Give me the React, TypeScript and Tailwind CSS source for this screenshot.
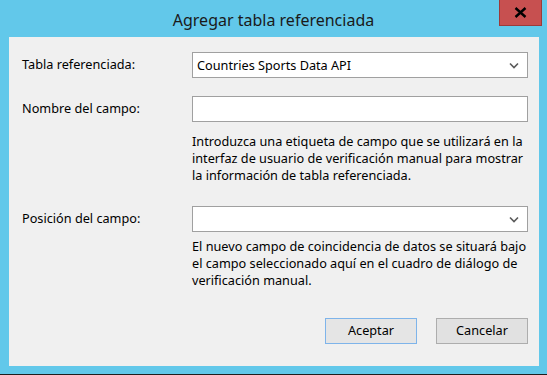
function Chevron() {
  return (
    <svg width="10" height="7" viewBox="0 0 10 7" className="shrink-0">
      <path d="M1 1.5 L5 5.5 L9 1.5" fill="none" stroke="#5a5a5a" strokeWidth="1.6" />
    </svg>
  );
}

type SelectProps = {
  value?: string;
};

function SelectBox({ value }: SelectProps) {
  return (
    <div className="flex h-[26px] w-[336px] items-center justify-between border border-[#a0a0a0] bg-white pl-[4px] pr-[8px]">
      <span className="leading-none text-black">{value}</span>
      <Chevron />
    </div>
  );
}

export default function App() {
  return (
    <div
      className="flex h-[375px] w-[547px] flex-col overflow-hidden bg-[#62c8ea] text-black"
      style={{ fontFamily: '"Noto Sans", "Open Sans", sans-serif' }}
    >
      {/* title bar */}
      <div className="relative flex h-[37px] shrink-0 items-center justify-center pt-[3px]">
        <span className="text-[16px] text-[#1a1a1a]">Agregar tabla referenciada</span>
        <div className="absolute right-[5px] top-0 flex h-[26px] w-[43px] items-center justify-center border border-t-0 border-[#9c3a3a] bg-[#c75050]">
          <svg width="13" height="11" viewBox="0 0 13 11">
            <path d="M1.5 1 L11.5 10 M11.5 1 L1.5 10" stroke="#000" strokeWidth="2.4" />
          </svg>
        </div>
      </div>

      {/* client area */}
      <div className="ml-[9px] mr-[8px] flex h-[329px] flex-col bg-[#f0f0f0] pl-[13px] pr-[11px] pt-[15px] text-[12.7px]">
        <div className="flex items-center">
          <span className="w-[170px]">Tabla referenciada:</span>
          <SelectBox value="Countries Sports Data API" />
        </div>

        <div className="mt-[18px] flex items-center">
          <span className="w-[170px]">Nombre del campo:</span>
          <div className="h-[26px] w-[336px] border border-[#a0a0a0] bg-white" />
        </div>

        <p className="ml-[170px] mt-[11px] whitespace-nowrap leading-[17px]">
          Introduzca una etiqueta de campo que se utilizará en la
          <br />
          interfaz de usuario de verificación manual para mostrar
          <br />
          la información de tabla referenciada.
        </p>

        <div className="mt-[22px] flex items-center">
          <span className="w-[170px]">Posición del campo:</span>
          <SelectBox />
        </div>

        <p className="ml-[170px] mt-[6px] whitespace-nowrap leading-[17px]">
          El nuevo campo de coincidencia de datos se situará bajo
          <br />
          el campo seleccionado aquí en el cuadro de diálogo de
          <br />
          verificación manual.
        </p>

        <div className="mt-auto mb-[22px] flex justify-end gap-[19px]">
          <button className="h-[26px] w-[92px] border border-[#7eb4ea] bg-[#e5e5e5]">Aceptar</button>
          <button className="h-[26px] w-[92px] border border-[#adadad] bg-[#e1e1e1]">Cancelar</button>
        </div>
      </div>

      <div className="flex-1" />
      <div className="h-px bg-[#1e1e1e]" />
    </div>
  );
}
